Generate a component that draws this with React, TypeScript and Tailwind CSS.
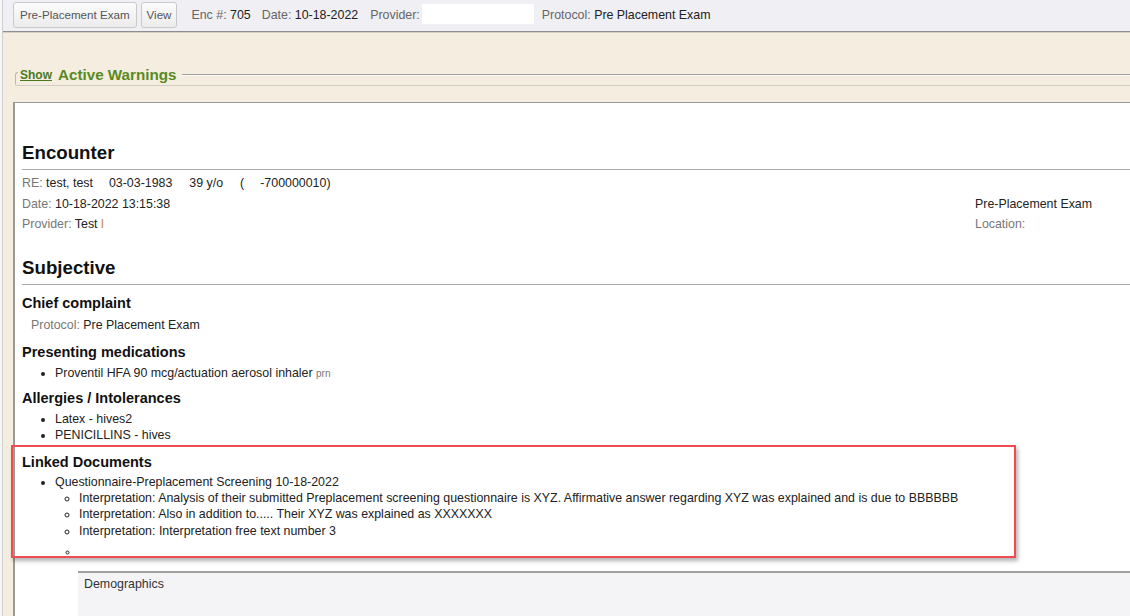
import React from "react";

export default function App() {
  return (
    <div className="relative h-[616px] w-[1130px] overflow-hidden bg-[#f4ede0] font-['Liberation_Sans',Arial,sans-serif] text-[12.4px] text-[#222]">
      <div className="flex h-full">
        <div className="w-[3px] shrink-0 border-r border-[#cfcfcf] bg-[#f7f7f7]" />
        <div className="flex min-w-0 flex-1 flex-col">
          {/* Top bar */}
          <div className="flex h-[32px] shrink-0 items-center border-b border-[#8e8e8e] bg-[#efeff4] pb-[1px] pl-[10px]">
            <button className="h-[26px] rounded-[3px] border border-[#c9c9c9] bg-gradient-to-b from-[#fbfbfb] to-[#ececec] px-[6px] text-[11.6px] text-[#555]">
              Pre-Placement Exam
            </button>
            <button className="ml-[4px] h-[26px] rounded-[3px] border border-[#c9c9c9] bg-gradient-to-b from-[#fbfbfb] to-[#ececec] px-[5px] text-[11.6px] text-[#555]">
              View
            </button>
            <span className="ml-[14px] text-[#666]">
              Enc #: <span className="text-[#222]">705</span>
            </span>
            <span className="ml-[11px] text-[#666]">
              Date: <span className="text-[#222]">10-18-2022</span>
            </span>
            <span className="ml-[12px] text-[#666]">Provider:</span>
            <span className="mb-[3px] ml-[2px] h-[20px] w-[112px] bg-white" />
            <span className="ml-[8px] text-[#666]">
              Protocol: <span className="text-[#222]">Pre Placement Exam</span>
            </span>
          </div>
          <div className="h-px shrink-0 bg-[#d4d0c6]" />

          {/* Active warnings fieldset */}
          <div className="ml-[12px] mt-[33px] w-[1140px] shrink-0">
            <div className="flex h-[18px] items-center">
              <div className="h-[12px] w-[3px] self-end rounded-tl-[4px] border-l border-t border-[#bcb7ac]" />
              <span className="ml-[2px] text-[12px] font-bold text-[#4b7a1e] underline">Show</span>
              <span className="ml-[6px] text-[15.2px] font-bold text-[#5a8a1e]">Active Warnings</span>
              <div className="ml-[6px] h-[2px] flex-1 border-t border-b border-t-[#a3a3a3] border-b-[#fbf8f2]" />
            </div>
            <div className="h-[2px] rounded-bl-[3px] border-b border-l border-[#d2cdc2]" />
          </div>

          {/* White panel */}
          <div className="ml-[10px] mt-[16px] w-[1150px] flex-1 border-l-2 border-t border-[#9a9a9a] bg-white pl-[7px]">
            <div className="mt-[39px] border-b border-[#aaaaaa] pb-[5px] text-[18.7px] font-bold leading-[22px] text-[#111]">
              Encounter
            </div>
            <div className="mt-[3px] leading-[20.5px]">
              <div className="flex">
                <span className="text-[#777]">RE:&nbsp;</span>
                <span>test, test</span>
                <span className="ml-[16px]">03-03-1983</span>
                <span className="ml-[17px]">39 y/o</span>
                <span className="ml-[17px]">(</span>
                <span className="ml-[16px]">-700000010)</span>
              </div>
              <div className="flex">
                <div className="w-[953px]">
                  <span className="text-[#777]">Date: </span>
                  10-18-2022 13:15:38
                </div>
                <div>Pre-Placement Exam</div>
              </div>
              <div className="flex">
                <div className="w-[953px]">
                  <span className="text-[#777]">Provider: </span>
                  Test <span className="text-[#c9843e]">l</span>
                </div>
                <div className="text-[#777]">Location:</div>
              </div>
            </div>

            <div className="mt-[22px] border-b border-[#aaaaaa] pb-[5px] text-[18.7px] font-bold leading-[22px] text-[#111]">
              Subjective
            </div>

            <div className="mt-[10px] text-[14.5px] font-bold leading-[17px] text-[#111]">Chief complaint</div>
            <div className="mt-[5px] pl-[9px] leading-[16px]">
              <span className="text-[#777]">Protocol: </span>Pre Placement Exam
            </div>

            <div className="mt-[11px] text-[14.5px] font-bold leading-[17px] text-[#111]">Presenting medications</div>
            <ul className="mt-[4px] list-disc pl-[33px] leading-[16px]">
              <li>
                Proventil HFA 90 mcg/actuation aerosol inhaler{" "}
                <span className="text-[10px] text-[#777]">prn</span>
              </li>
            </ul>

            <div className="mt-[8px] text-[14.5px] font-bold leading-[17px] text-[#111]">Allergies / Intolerances</div>
            <ul className="mt-[4px] list-disc pl-[33px] leading-[16px]">
              <li>Latex - hives2</li>
              <li>PENICILLINS - hives</li>
            </ul>

            <div className="mt-[11px] text-[14.5px] font-bold leading-[17px] text-[#111]">Linked Documents</div>
            <ul className="mt-[3px] list-disc pl-[33px] leading-[16px]">
              <li>
                Questionnaire-Preplacement Screening 10-18-2022
                <ul className="list-[circle] pl-[24px] leading-[16.7px]">
                  <li>
                    Interpretation: Analysis of their submitted Preplacement screening questionnaire is XYZ. Affirmative
                    answer regarding XYZ was explained and is due to BBBBBB
                  </li>
                  <li>Interpretation: Also in addition to..... Their XYZ was explained as XXXXXXX</li>
                  <li>Interpretation: Interpretation free text number 3</li>
                  <li className="mt-[5px] text-[10px]">&nbsp;</li>
                </ul>
              </li>
            </ul>

            <div className="ml-[56px] mt-[10px] h-[60px] border-t-2 border-[#a0a0a0] bg-[#f4f4f6] pl-[6px] pt-[3px] leading-[16px] text-[#333]">
              Demographics
            </div>
          </div>
        </div>
      </div>

      {/* Red annotation box */}
      <div className="pointer-events-none absolute left-[11px] top-[445px] h-[113px] w-[1005px] border-2 border-[#ef4b50] shadow-[2px_3px_4px_rgba(0,0,0,0.3)]" />
    </div>
  );
}
